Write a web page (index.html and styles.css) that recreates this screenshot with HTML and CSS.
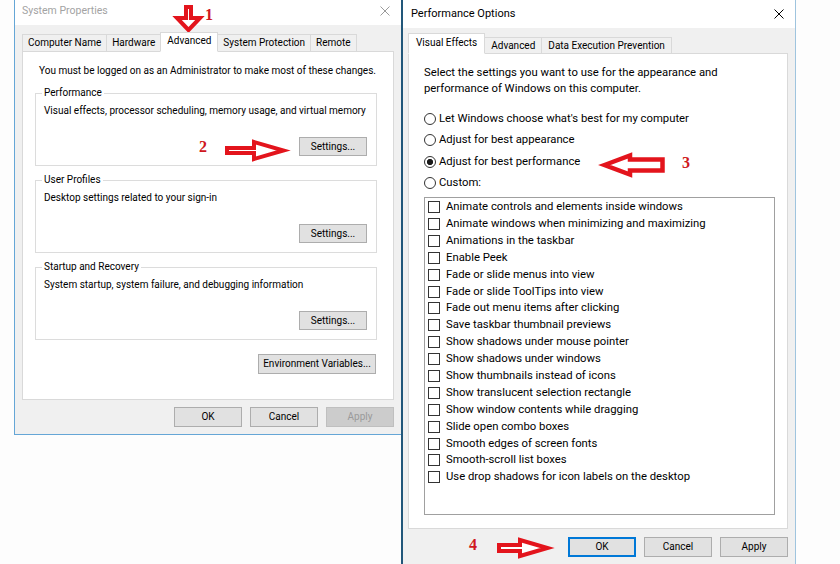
FILE: index.html
```html
<!DOCTYPE html>
<html lang="en">
	<head>
		<meta charset="UTF-8" />
		<meta name="viewport" content="width=device-width, initial-scale=1.0" />
		<title>Performance Options</title>
		<link rel="stylesheet" href="styles.css">
	</head>
	<body>
		<div class="desk">
			<!-- System Properties, Advanced tab -->
			<div class="window sysprops">
				<div class="titlebar">
					<span class="title">System Properties</span>
					<svg class="close" width="10" height="10" viewBox="0 0 10 10"><path d="M0.5 0.5L9.5 9.5M9.5 0.5L0.5 9.5" /></svg>
				</div>
				<div class="body">
					<div class="tabs">
						<span class="tab">Computer Name</span>
						<span class="tab">Hardware</span>
						<span class="tab active">Advanced</span>
						<span class="tab">System Protection</span>
						<span class="tab">Remote</span>
					</div>
					<div class="panel">
						<p class="note">You must be logged on as an Administrator to make most of these changes.</p>
						<fieldset class="group">
							<legend>Performance</legend>
							<p>Visual effects, processor scheduling, memory usage, and virtual memory</p>
							<div class="row-end"><button class="btn">Settings...</button></div>
						</fieldset>
						<fieldset class="group">
							<legend>User Profiles</legend>
							<p>Desktop settings related to your sign-in</p>
							<div class="row-end"><button class="btn">Settings...</button></div>
						</fieldset>
						<fieldset class="group">
							<legend>Startup and Recovery</legend>
							<p>System startup, system failure, and debugging information</p>
							<div class="row-end"><button class="btn">Settings...</button></div>
						</fieldset>
						<div class="row-end env"><button class="btn wide">Environment Variables...</button></div>
					</div>
					<div class="actions">
						<button class="btn">OK</button>
						<button class="btn">Cancel</button>
						<button class="btn" disabled>Apply</button>
					</div>
				</div>
			</div>

			<!-- Performance Options, Visual Effects tab -->
			<div class="window perfopts">
				<div class="titlebar">
					<span class="title">Performance Options</span>
					<svg class="close" width="10" height="10" viewBox="0 0 10 10"><path d="M0.5 0.5L9.5 9.5M9.5 0.5L0.5 9.5" /></svg>
				</div>
				<div class="body">
					<div class="tabs">
						<span class="tab active">Visual Effects</span>
						<span class="tab">Advanced</span>
						<span class="tab">Data Execution Prevention</span>
					</div>
					<div class="panel">
						<p class="intro">Select the settings you want to use for the appearance and<br>performance of Windows on this computer.</p>
						<div class="choices">
							<label class="choice"><input type="radio" name="fx" /> Let Windows choose what's best for my computer</label>
							<label class="choice"><input type="radio" name="fx" /> Adjust for best appearance</label>
							<label class="choice"><input type="radio" name="fx" checked /> Adjust for best performance</label>
							<label class="choice"><input type="radio" name="fx" /> Custom:</label>
						</div>
						<div class="listbox">
							<label class="item"><input type="checkbox" /> Animate controls and elements inside windows</label>
							<label class="item"><input type="checkbox" /> Animate windows when minimizing and maximizing</label>
							<label class="item"><input type="checkbox" /> Animations in the taskbar</label>
							<label class="item"><input type="checkbox" /> Enable Peek</label>
							<label class="item"><input type="checkbox" /> Fade or slide menus into view</label>
							<label class="item"><input type="checkbox" /> Fade or slide ToolTips into view</label>
							<label class="item"><input type="checkbox" /> Fade out menu items after clicking</label>
							<label class="item"><input type="checkbox" /> Save taskbar thumbnail previews</label>
							<label class="item"><input type="checkbox" /> Show shadows under mouse pointer</label>
							<label class="item"><input type="checkbox" /> Show shadows under windows</label>
							<label class="item"><input type="checkbox" /> Show thumbnails instead of icons</label>
							<label class="item"><input type="checkbox" /> Show translucent selection rectangle</label>
							<label class="item"><input type="checkbox" /> Show window contents while dragging</label>
							<label class="item"><input type="checkbox" /> Slide open combo boxes</label>
							<label class="item"><input type="checkbox" /> Smooth edges of screen fonts</label>
							<label class="item"><input type="checkbox" /> Smooth-scroll list boxes</label>
							<label class="item"><input type="checkbox" /> Use drop shadows for icon labels on the desktop</label>
						</div>
					</div>
					<div class="actions">
						<button class="btn default">OK</button>
						<button class="btn">Cancel</button>
						<button class="btn">Apply</button>
					</div>
				</div>
			</div>

			<!-- step markers drawn over the dialogs -->
			<svg class="mark mark-1" width="34" height="34" viewBox="0 0 34 34"><path d="M14 5H19V16H28L16.5 28L5 16H14Z" /></svg>
			<span class="num num-1">1</span>
			<svg class="mark mark-2" width="68" height="27" viewBox="0 0 68 27"><path d="M5 11H32V5L61.5 13.5L32 22V16H5Z" /></svg>
			<span class="num num-2">2</span>
			<svg class="mark mark-3" width="70" height="30" viewBox="0 0 70 30"><path d="M6.5 15L32 5.5V9.5H64.5V20.5H32V24.5Z" /></svg>
			<span class="num num-3">3</span>
			<svg class="mark mark-4" width="60" height="26" viewBox="0 0 60 26"><path d="M5 10H26V5L53.5 13L26 21V16H5Z" /></svg>
			<span class="num num-4">4</span>
		</div>
	</body>
</html>
```

FILE: styles.css
```css
* {
	box-sizing: border-box;
}
body {
	margin: 0;
	background-color: #fdfdfd;
	font-family: Roboto, "Noto Sans", sans-serif;
	color: #000;
}
p {
	margin: 0;
}
.desk {
	position: relative;
	display: flex;
	align-items: flex-start;
	height: 564px;
	padding-left: 14px;
	overflow: hidden;
}

/* windows */
.window {
	display: flex;
	flex-direction: column;
	flex: none;
	background-color: #f0f0f0;
}
.sysprops {
	width: 387px;
	height: 435px;
	border-left: 1px solid #65a6d6;
	border-bottom: 1px solid #65a6d6;
	font-size: 10px;
	line-height: 14px;
}
.perfopts {
	width: 395px;
	height: 564px;
	border-left: 2px solid #22577a;
	border-right: 1px solid #9fc4de;
	font-size: 11.3px;
	line-height: 16px;
}
.titlebar {
	display: flex;
	align-items: center;
	justify-content: space-between;
	flex: none;
	background-color: #fff;
}
.sysprops .titlebar {
	height: 25px;
	padding: 0 11px 3px 7px;
	font-size: 10.5px;
	color: #a3a3a3;
}
.perfopts .titlebar {
	height: 28px;
	padding: 0 11px 0 8px;
	font-size: 11px;
}
.close path {
	fill: none;
	stroke: currentColor;
	stroke-width: 1;
}
.sysprops .close {
	color: #9a9a9a;
}
.body {
	flex: 1;
	display: flex;
	flex-direction: column;
}
.sysprops .body {
	padding: 7px 7px 0;
}
.perfopts .body {
	padding: 5px 7px 0 5px;
}

/* tab strip */
.tabs {
	display: flex;
	align-items: flex-end;
	margin-bottom: -1px;
	font-size: 10px;
}
.tab {
	display: flex;
	align-items: center;
	padding: 0 6px;
	border: 1px solid #d9d9d9;
	margin-left: -1px;
	background-color: #f0f0f0;
	white-space: nowrap;
}
.tab:first-child {
	margin-left: 0;
}
.tab.active {
	position: relative;
	z-index: 1;
	padding: 0 7px 2px;
	background-color: #fff;
	border-bottom-color: #fff;
}
.sysprops .tab {
	height: 18px;
	padding: 0 5px;
}
.sysprops .tab.active {
	height: 20px;
	padding: 0 6px 2px;
}
.perfopts .tab {
	height: 17px;
}
.perfopts .tab.active {
	height: 21px;
}
.panel {
	flex: none;
	background-color: #fff;
	border: 1px solid #d9d9d9;
}
.sysprops .panel {
	height: 349px;
	padding: 12px 16px 0 12px;
}
.perfopts .panel {
	height: 476px;
	padding: 11px 12px 0 15px;
}

/* System Properties content */
.note {
	padding-left: 4px;
	margin-bottom: 8px;
}
.group {
	min-width: 0;
	margin: 0 0 7px;
	padding: 4px 9px 9px 8px;
	border: 1px solid #dcdcdc;
}
.group legend {
	padding: 0 2px;
	margin-left: -2px;
}
.row-end {
	display: flex;
	justify-content: flex-end;
	margin-top: 19px;
}
.env {
	margin-top: 14px;
	padding-right: 1px;
}

/* buttons */
.btn {
	width: 68px;
	height: 20px;
	padding: 0;
	font-family: inherit;
	font-size: 10px;
	line-height: 1;
	color: #000;
	background-color: #e1e1e1;
	border: 1px solid #adadad;
}
.group .btn {
	height: 19px;
}
.btn.wide {
	width: 118px;
}
.btn:disabled {
	color: #9a9a9a;
	background-color: #cccccc;
	border-color: #bfbfbf;
}
.btn.default {
	border-color: #0078d7;
	box-shadow: inset 0 0 0 1px #0078d7;
}
.actions {
	display: flex;
	justify-content: flex-end;
	gap: 8px;
}
.sysprops .actions {
	margin-top: 7px;
}
.perfopts .actions {
	margin-top: 8px;
}

/* Performance Options content */
.choices {
	margin-top: 11.5px;
}
.choice {
	display: flex;
	align-items: center;
	gap: 3px;
	height: 21.3px;
}
.listbox {
	width: 351px;
	height: 318px;
	margin-top: 3px;
	padding: 1px 0 0 3px;
	border: 1px solid #a0a0a0;
	background-color: #fff;
}
.item {
	display: flex;
	align-items: center;
	gap: 6px;
	height: 16.9px;
	white-space: nowrap;
}
input {
	appearance: none;
	flex: none;
	width: 12px;
	height: 12px;
	margin: 0;
	border: 1px solid #333;
	background-color: #fff;
}
input[type="radio"] {
	border-radius: 50%;
}
input[type="radio"]:checked {
	background: radial-gradient(circle, #1a1a1a 0 2.8px, #fff 3.3px);
}

/* red step markers */
.mark {
	position: absolute;
	overflow: visible;
}
.mark path {
	fill: #fff;
	stroke: #e3141c;
	stroke-width: 4;
}
.mark-3 path {
	stroke-width: 4.5;
}
.mark-1 {
	left: 172px;
	top: 2px;
}
.mark-2 {
	left: 222px;
	top: 137px;
}
.mark-3 {
	left: 598px;
	top: 150px;
}
.mark-4 {
	left: 494px;
	top: 535px;
}
.num {
	position: absolute;
	font: bold 16px/16px "Liberation Serif", serif;
	color: #cf1820;
}
.num-1 {
	left: 205px;
	top: 7px;
}
.num-2 {
	left: 199px;
	top: 139px;
}
.num-3 {
	left: 682px;
	top: 155px;
}
.num-4 {
	left: 469px;
	top: 537px;
}
```
